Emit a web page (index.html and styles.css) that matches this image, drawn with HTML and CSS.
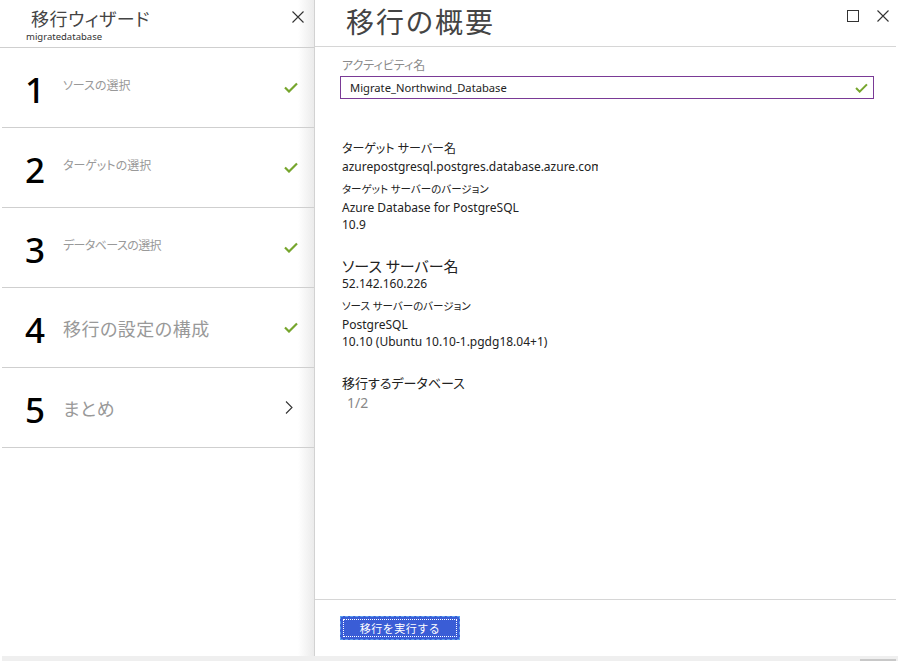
FILE: index.html
```html
<!DOCTYPE html>
<html lang="ja">
<head>
<meta charset="utf-8">
<title>移行ウィザード</title>
<link rel="stylesheet" href="styles.css">
</head>
<body>
<div class="app">
  <aside class="wizard">
    <header class="wiz-head">
      <div class="wiz-titles">
        <div class="wiz-title">移行ウィザード</div>
        <div class="wiz-sub">migratedatabase</div>
      </div>
      <svg class="icon-x" width="12" height="12" viewBox="0 0 12 12"><path d="M0.5 0.5 L11.5 11.5 M11.5 0.5 L0.5 11.5" stroke="#333" stroke-width="1.1" fill="none"/></svg>
    </header>
    <ol class="steps">
      <li class="step">
        <span class="num">1</span>
        <span class="label small">ソースの選択</span>
        <svg class="check" width="14" height="11" viewBox="0 0 14 11"><path d="M1 5.5 L5 9.5 L13 1.5" stroke="#76a52d" stroke-width="2.2" fill="none"/></svg>
      </li>
      <li class="step">
        <span class="num">2</span>
        <span class="label small">ターゲットの選択</span>
        <svg class="check" width="14" height="11" viewBox="0 0 14 11"><path d="M1 5.5 L5 9.5 L13 1.5" stroke="#76a52d" stroke-width="2.2" fill="none"/></svg>
      </li>
      <li class="step">
        <span class="num">3</span>
        <span class="label small narrow">データベースの選択</span>
        <svg class="check" width="14" height="11" viewBox="0 0 14 11"><path d="M1 5.5 L5 9.5 L13 1.5" stroke="#76a52d" stroke-width="2.2" fill="none"/></svg>
      </li>
      <li class="step">
        <span class="num">4</span>
        <span class="label big">移行の設定の構成</span>
        <svg class="check" width="14" height="11" viewBox="0 0 14 11"><path d="M1 5.5 L5 9.5 L13 1.5" stroke="#76a52d" stroke-width="2.2" fill="none"/></svg>
      </li>
      <li class="step">
        <span class="num">5</span>
        <span class="label big">まとめ</span>
        <svg class="chev" width="8" height="13" viewBox="0 0 8 13"><path d="M1 0.5 L7 6.5 L1 12.5" stroke="#333" stroke-width="1.1" fill="none"/></svg>
      </li>
    </ol>
  </aside>
  <main class="summary">
    <header class="sum-head">
      <h1 class="sum-title">移行の概要</h1>
      <div class="win-ctrls">
        <svg width="12" height="12" viewBox="0 0 12 12"><rect x="0.5" y="0.5" width="11" height="11" stroke="#333" stroke-width="1" fill="none"/></svg>
        <svg width="12" height="12" viewBox="0 0 12 12"><path d="M0.5 0.5 L11.5 11.5 M11.5 0.5 L0.5 11.5" stroke="#333" stroke-width="1.1" fill="none"/></svg>
      </div>
    </header>
    <section class="sum-body">
      <div class="field-label">アクティビティ名</div>
      <div class="input">
        <span class="input-text">Migrate_Northwind_Database</span>
        <svg class="check" width="13" height="10" viewBox="0 0 14 11"><path d="M1 5.5 L5 9.5 L13 1.5" stroke="#76a52d" stroke-width="2.2" fill="none"/></svg>
      </div>
      <div class="info">
        <div class="group target">
          <div class="h-md">ターゲット サーバー名</div>
          <div class="val">azurepostgresql.postgres.database.azure.com</div>
          <div class="h-sm">ターゲット サーバーのバージョン</div>
          <div class="val">Azure Database for PostgreSQL</div>
          <div class="val">10.9</div>
        </div>
        <div class="group source">
          <div class="h-lg">ソース サーバー名</div>
          <div class="val">52.142.160.226</div>
          <div class="h-sm">ソース サーバーのバージョン</div>
          <div class="val">PostgreSQL</div>
          <div class="val">10.10 (Ubuntu 10.10-1.pgdg18.04+1)</div>
        </div>
        <div class="group dbs">
          <div class="h-db">移行するデータベース</div>
          <div class="count">1/2</div>
        </div>
      </div>
    </section>
    <footer class="sum-foot">
      <button class="run-btn" type="button"><span class="run-inner">移行を実行する</span></button>
    </footer>
  </main>
</div>
<div class="statusbar"><div class="scroll-thumb"></div></div>
</body>
</html>
```
FILE: styles.css
```css
* { box-sizing: border-box; }
html, body {
  margin: 0;
  padding: 0;
  width: 898px;
  height: 661px;
  overflow: hidden;
  background: #ffffff;
  font-family: "Noto Sans", "Noto Sans CJK JP", sans-serif;
  font-feature-settings: "palt";
  color: #333;
}
.app {
  display: flex;
  height: 656px;
}
.statusbar {
  height: 5px;
  background: #efefef;
  margin-left: 2px;
  display: flex;
  justify-content: flex-end;
}
.scroll-thumb {
  width: 36px;
  height: 2px;
  margin-top: 3px;
  margin-right: 2px;
  background: #c8c8c8;
}

/* ----- wizard ----- */
.wizard {
  width: 315px;
  flex: none;
  border-right: 1px solid #d2d2d2;
  background: linear-gradient(to right, #ffffff 0, #ffffff 298px, #ebebeb 314px);
}
.wiz-head {
  height: 48px;
  border-bottom: 1px solid #cfcfcf;
  display: flex;
  justify-content: space-between;
  align-items: flex-start;
  padding: 0 8px 0 26px;
}
.wiz-titles { padding-top: 9px; }
.wiz-title {
  font-size: 18px;
  line-height: 21px;
  color: #444;
  padding-left: 5px;
  letter-spacing: 0.5px;
}
.wiz-sub {
  font-family: "Noto Sans", sans-serif;
  font-size: 9.5px;
  line-height: 11px;
  margin-top: 1px;
  color: #333;
}
.icon-x { margin-top: 11px; margin-right: 2px; }
.steps {
  list-style: none;
  margin: 0;
  padding: 0 0 0 2px;
}
.step {
  height: 80px;
  border-bottom: 1px solid #cfcfcf;
  display: flex;
  align-items: center;
  padding: 0 16px 0 23px;
}
.num {
  width: 38px;
  font-family: "Noto Sans", sans-serif;
  font-size: 35px;
  font-weight: 500;
  color: #000;
  line-height: 40px;
  padding-top: 4px;
}
.label { flex: 1; color: #999; }
.label.small { font-size: 12px; margin-top: -6px; }
.label.narrow { letter-spacing: -0.6px; }
.label.big { font-size: 18px; letter-spacing: 0.5px; }
.check { flex: none; }
.chev { flex: none; margin-right: 5px; }

/* ----- summary ----- */
.summary {
  flex: 1;
  display: flex;
  flex-direction: column;
  margin-right: 2px;
}
.sum-head {
  height: 47px;
  border-bottom: 1px solid #d6d6d6;
  display: flex;
  justify-content: space-between;
  align-items: flex-start;
  padding-left: 31px;
}
.sum-title {
  margin: 0;
  font-size: 28px;
  font-weight: 400;
  line-height: 44px;
  color: #444;
  letter-spacing: 2px;
}
.win-ctrls {
  display: flex;
  gap: 18px;
  padding: 10px 7px 0 0;
}
.sum-body {
  flex: 1;
  padding: 11px 0 0 25px;
}
.field-label {
  font-size: 12px;
  color: #8a8a8a;
  line-height: 16px;
  padding-left: 2px;
}
.input {
  margin-top: 2px;
  width: 534px;
  height: 23px;
  border: 1px solid #7a3a96;
  display: flex;
  align-items: center;
  justify-content: space-between;
  padding: 0 5px 0 9px;
}
.input-text {
  font-size: 11.2px;
  color: #222;
}
.info {
  width: 258px;
  overflow: hidden;
  padding-top: 41px;
  padding-left: 2px;
}
.group { white-space: nowrap; }
.h-md { font-size: 12px; line-height: 18px; color: #222; }
.h-sm { font-size: 10.5px; line-height: 20px; color: #222; margin-top: 4px; }
.h-lg { font-size: 15px; line-height: 18px; color: #222; }
.h-db { font-size: 13px; line-height: 18px; color: #222; }
.val { font-size: 12px; line-height: 17px; color: #222; }
.source { margin-top: 24px; }
.dbs { margin-top: 24px; }
.count { font-size: 14px; color: #888; padding-left: 5px; line-height: 22px; }

.sum-foot {
  height: 57px;
  border-top: 1px solid #d6d6d6;
  padding: 16px 0 0 25px;
}
.run-btn {
  width: 120px;
  height: 24px;
  padding: 2px;
  border: 1px dashed #5aa0ee;
  background: #3a5dd6;
  display: block;
  cursor: pointer;
}
.run-inner {
  display: flex;
  align-items: center;
  justify-content: center;
  height: 100%;
  border: 1px dotted #ffffff;
  color: #fff;
  font-size: 11px;
  font-family: "Noto Sans CJK JP", sans-serif;
  letter-spacing: 0.5px;
}
```
